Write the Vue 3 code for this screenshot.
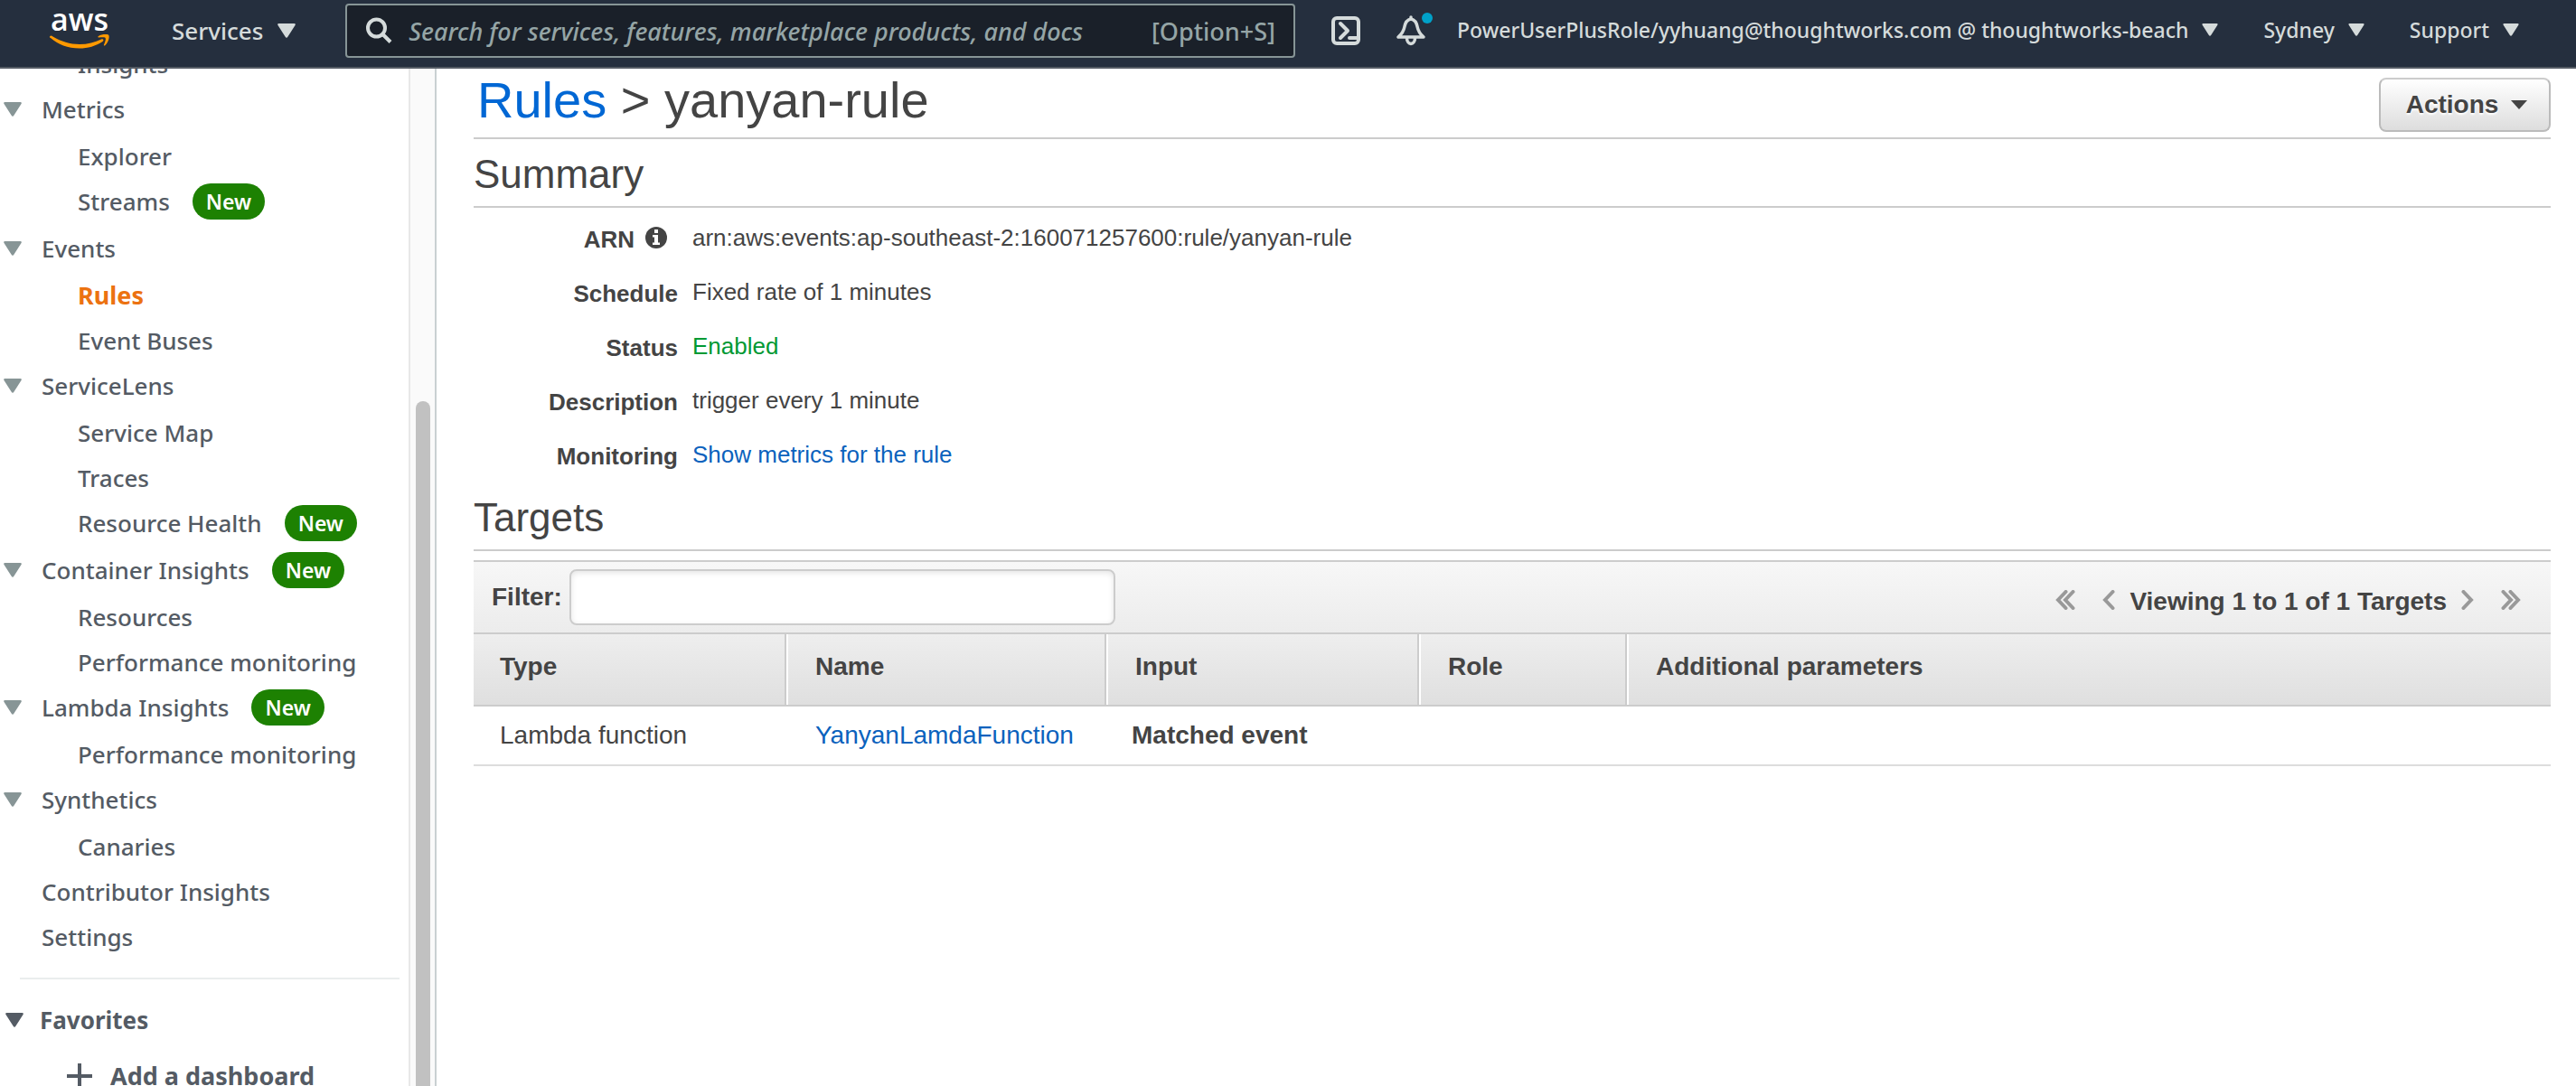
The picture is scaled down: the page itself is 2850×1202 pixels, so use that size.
<script setup>
import { ref } from 'vue'

const search = ref('')
const filter = ref('')

const groups = [
  { label: 'Insights', child: true },
  {
    label: 'Metrics',
    items: [{ label: 'Explorer' }, { label: 'Streams', isNew: true }],
  },
  {
    label: 'Events',
    items: [{ label: 'Rules', active: true }, { label: 'Event Buses' }],
  },
  {
    label: 'ServiceLens',
    items: [{ label: 'Service Map' }, { label: 'Traces' }, { label: 'Resource Health', isNew: true }],
  },
  {
    label: 'Container Insights',
    isNew: true,
    items: [{ label: 'Resources' }, { label: 'Performance monitoring' }],
  },
  { label: 'Lambda Insights', isNew: true, items: [{ label: 'Performance monitoring' }] },
  { label: 'Synthetics', items: [{ label: 'Canaries' }] },
  { label: 'Contributor Insights' },
  { label: 'Settings' },
]

const menus = ['PowerUserPlusRole/yyhuang@thoughtworks.com @ thoughtworks-beach', 'Sydney', 'Support']
const columns = ['Type', 'Name', 'Input', 'Role', 'Additional parameters']
</script>

<template>
  <div class="console">
    <header class="topbar">
      <a class="logo" href="#" aria-label="AWS home">
        <svg width="66" height="50" viewBox="0 -6 66 50">
          <text x="33" y="24" text-anchor="middle" class="logo-text">aws</text>
          <path fill="#ff9900" d="M0 30.500C1 29 2 29.500 3.500 30.500C13 36 22 39 33 39C42 39 50 37 57 33.500C59 32.500 60.500 34.500 58.500 36C51 41 42 43.500 33 43.500C20 43.500 9 39 1 32C0 31.500-.3 31 0 30.500Z" />
          <path fill="#ff9900" d="M54 30C57 28 62 27.500 65 28.500C66.500 29.500 65.500 36.500 61.500 40C60.500 41 59.500 40.500 60 39.500C61.500 36 62.500 33 61.500 31.800C60.500 31 57 31.200 54.500 31.400C53 31.500 53 30.700 54 30Z" />
        </svg>
      </a>
      <button class="menu services" type="button">
        Services
        <svg width="20" height="16" viewBox="0 0 20 16"><path class="tri" d="M1.500 0H18.500Q20.500 0 19.500 2L11.500 14.500Q10 17 8.500 14.500L.5 2Q-.5 0 1.500 0Z" /></svg>
      </button>
      <div class="search">
        <svg width="30" height="30" viewBox="0 0 30 30" fill="none" stroke="#d5dbdb" stroke-width="4">
          <circle cx="12.500" cy="12" r="9.500" />
          <path d="M19.500 19L28 27.500" />
        </svg>
        <input v-model="search" type="text" aria-label="Search" placeholder="Search for services, features, marketplace products, and docs" />
        <span class="hint">[Option+S]</span>
      </div>
      <button class="icon-button" type="button" aria-label="CloudShell">
        <svg width="32" height="32" viewBox="0 0 32 32" fill="none" stroke="#d5dbdb" stroke-width="4">
          <rect x="2" y="2" width="28" height="28" rx="4" />
          <path d="M10 8L18 16L10 24" stroke-linecap="round" stroke-linejoin="round" />
          <path d="M20 24H28" stroke-linecap="round" />
        </svg>
      </button>
      <button class="icon-button bell" type="button" aria-label="Notifications">
        <svg width="42" height="40" viewBox="0 0 42 40" fill="none" stroke="#d5dbdb" stroke-width="3.500" stroke-linejoin="round" stroke-linecap="round">
          <path d="M16 5V7M16 7C11 8 9.500 12 8.800 16C8 20.500 6 23.500 2 27H30C26 23.500 24 20.500 23.200 16C22.500 12 21 8 16 7Z" />
          <path d="M11.500 28C11.500 36.500 20.500 36.500 20.500 28" />
          <circle cx="34" cy="6" r="6" fill="#00a1c9" stroke="none" />
        </svg>
      </button>
      <button v-for="menu in menus" :key="menu" class="menu account" type="button">
        {{ menu }}
        <svg width="18" height="14" viewBox="0 0 20 16"><path class="tri" d="M1.500 0H18.500Q20.500 0 19.500 2L11.500 14.500Q10 17 8.500 14.500L.5 2Q-.5 0 1.500 0Z" /></svg>
      </button>
    </header>

    <div class="body">
      <aside class="sidebar">
        <nav class="nav" aria-label="CloudWatch">
          <ul>
            <li v-for="group in groups" :key="group.label">
              <div class="row" :class="{ child: group.child }">
                <svg v-if="group.items" class="marker" width="20" height="16" viewBox="0 0 20 16"><path d="M1.500 0H18.500Q20.500 0 19.500 2L11.500 14.500Q10 17 8.500 14.500L.5 2Q-.5 0 1.500 0Z" /></svg>
                <span v-else class="marker"></span>
                <a href="#">{{ group.label }}</a>
                <span v-if="group.isNew" class="badge">New</span>
              </div>
              <ul v-if="group.items" class="children">
                <li v-for="item in group.items" :key="item.label" class="row child" :class="{ tall: item.isNew }">
                  <span class="marker"></span>
                  <a href="#" :class="{ active: item.active }">{{ item.label }}</a>
                  <span v-if="item.isNew" class="badge">New</span>
                </li>
              </ul>
            </li>
          </ul>
          <hr />
          <div class="row favorites">
            <svg class="marker" width="20" height="16" viewBox="0 0 20 16"><path d="M1.500 0H18.500Q20.500 0 19.500 2L11.500 14.500Q10 17 8.500 14.500L.5 2Q-.5 0 1.500 0Z" /></svg>
            <a href="#">Favorites</a>
          </div>
          <div class="row add">
            <svg width="28" height="28" viewBox="0 0 28 28" stroke="#545b64" stroke-width="4"><path d="M0 14H28M14 0V28" /></svg>
            <a href="#">Add a dashboard</a>
          </div>
        </nav>
        <div class="track" aria-hidden="true"><div class="thumb"></div></div>
      </aside>

      <main class="main">
        <div class="title">
          <h1><a href="#">Rules</a> &gt; yanyan-rule</h1>
          <button class="actions" type="button">
            Actions
            <svg width="18" height="10" viewBox="0 0 18 10"><path fill="#444" d="M0 0H18L9 10Z" /></svg>
          </button>
        </div>

        <h2>Summary</h2>
        <dl class="summary">
          <dt>
            ARN
            <svg class="info" width="24" height="24" viewBox="0 0 24 24">
              <circle cx="12" cy="12" r="12" fill="#444" />
              <path fill="#fff" d="M10 3H14V7H10ZM8 9H14V17.500H16V20H8V17.500H10V11.500H8Z" />
            </svg>
          </dt>
          <dd>arn:aws:events:ap-southeast-2:160071257600:rule/yanyan-rule</dd>
          <dt>Schedule</dt>
          <dd>Fixed rate of 1 minutes</dd>
          <dt>Status</dt>
          <dd class="enabled">Enabled</dd>
          <dt>Description</dt>
          <dd>trigger every 1 minute</dd>
          <dt>Monitoring</dt>
          <dd><a href="#">Show metrics for the rule</a></dd>
        </dl>

        <h2>Targets</h2>
        <section class="targets">
          <div class="toolbar">
            <label for="filter">Filter:</label>
            <input id="filter" v-model="filter" type="text" />
            <div class="pager">
              <button type="button" aria-label="First page">
                <svg width="22" height="22" viewBox="0 0 22 22"><path d="M11.500 2L3 11L11.500 20M19.500 2L11 11L19.500 20" /></svg>
              </button>
              <button class="prev" type="button" aria-label="Previous page">
                <svg width="14" height="22" viewBox="0 0 14 22"><path d="M11.500 2L3 11L11.500 20" /></svg>
              </button>
              <span>Viewing 1 to 1 of 1 Targets</span>
              <button class="next" type="button" aria-label="Next page">
                <svg width="14" height="22" viewBox="0 0 14 22"><path d="M2.500 2L11 11L2.500 20" /></svg>
              </button>
              <button type="button" aria-label="Last page">
                <svg width="22" height="22" viewBox="0 0 22 22"><path d="M2.500 2L11 11L2.500 20M10.500 2L19 11L10.500 20" /></svg>
              </button>
            </div>
          </div>
          <table>
            <colgroup>
              <col class="c-type" /><col class="c-name" /><col class="c-input" /><col class="c-role" /><col />
            </colgroup>
            <thead>
              <tr>
                <th v-for="column in columns" :key="column" scope="col">{{ column }}</th>
              </tr>
            </thead>
            <tbody>
              <tr>
                <td>Lambda function</td>
                <td><a href="#">YanyanLamdaFunction</a></td>
                <td class="input">Matched event</td>
                <td></td>
                <td></td>
              </tr>
            </tbody>
          </table>
        </section>
      </main>
    </div>
  </div>
</template>

<style>
body {
  margin: 0;
  background: #fff;
}
</style>

<style scoped>
.console {
  display: flex;
  flex-direction: column;
  height: 100vh;
  overflow: hidden;
  color: #444;
  font-family: "Liberation Sans", Arial, sans-serif;
  font-size: 28px;
}
button {
  font: inherit;
  color: inherit;
  margin: 0;
  padding: 0;
  border: 0;
  background: none;
}
a {
  color: #0b62bd;
  text-decoration: none;
}
svg {
  flex: none;
}

/* top bar */
.topbar {
  display: flex;
  flex: none;
  box-sizing: border-box;
  height: 76px;
  padding: 4px 63px 0 55px;
  background: #252f3e;
  border-bottom: 2px solid #545b64;
  color: #d5dbdb;
  font-family: "Noto Sans", "Open Sans", sans-serif;
  font-weight: 500;
}
.topbar > * {
  flex: none;
  height: 60px;
}
.logo {
  display: flex;
}
.logo svg {
  overflow: visible;
}
.logo-text {
  font: 600 34px "Open Sans", "Noto Sans", sans-serif;
  fill: #fff;
}
.menu {
  display: flex;
  align-items: center;
  white-space: nowrap;
}
.tri {
  fill: #d5dbdb;
}
.services {
  gap: 16px;
  margin-left: 69px;
  font-size: 26px;
}
.account {
  gap: 15px;
  margin-left: 50px;
  padding-bottom: 2px;
  font-size: 23px;
}
.topbar > .search {
  flex: 1;
  display: flex;
  align-items: center;
  box-sizing: border-box;
  height: 60px;
  margin: 0 40px 0 55px;
  padding: 0 20px;
  border: 2px solid #879596;
  border-radius: 4px;
  background: #1a2029;
  color: #95a5a6;
  font-size: 27px;
}
.search input {
  flex: 1;
  min-width: 0;
  margin-left: 18px;
  padding: 0;
  border: 0;
  outline: 0;
  background: none;
  color: #d5dbdb;
  font: inherit;
}
.search input::placeholder {
  color: #95a5a6;
  font-style: italic;
  opacity: 1;
}
.icon-button {
  display: flex;
  align-items: center;
}
.bell {
  margin-left: 40px;
}
.bell + .account {
  margin-left: 25px;
}

/* sidebar */
.body {
  display: flex;
  flex: 1;
  min-height: 0;
}
.sidebar {
  display: flex;
  flex: none;
  font: 500 26px/50px "Noto Sans", "Open Sans", sans-serif;
}
.nav {
  width: 452px;
  overflow: hidden;
}
.nav ul {
  margin: 0;
  padding: 0;
  list-style: none;
}
.nav > ul {
  margin-top: -30px;
}
.nav a {
  color: #545b64;
}
.nav a.active {
  color: #ec7211;
  font-size: 27px;
  font-weight: 700;
}
.row {
  display: flex;
  align-items: center;
  height: 50px;
  padding-left: 4px;
}
.marker {
  width: 20px;
  margin-right: 22px;
  fill: #879596;
}
.row.child {
  padding-left: 44px;
}
.row.tall {
  padding-bottom: 2px;
}
.nav .children {
  margin-top: 2px;
}
.badge {
  margin-left: 25px;
  padding: 0 15px;
  border-radius: 20px;
  background: #1d8102;
  color: #fff;
  font-size: 23px;
  font-weight: 600;
  line-height: 40px;
}
.nav hr {
  height: 2px;
  margin: 20px 10px 20px 22px;
  border: 0;
  background: #eaeded;
}
.favorites {
  padding-left: 6px;
  font-weight: 700;
}
.favorites .marker {
  margin-right: 18px;
  fill: #545b64;
}
.row.add {
  gap: 20px;
  margin-top: 12px;
  padding-left: 74px;
  font-size: 27px;
  font-weight: 700;
}
.track {
  display: flex;
  flex-direction: column;
  width: 16px;
  padding: 368px 5px 0 6px;
  border-left: 2px solid #e8e8e8;
  border-right: 2px solid #c9d0d2;
  background: #fafafa;
}
.thumb {
  flex: 1;
  border-radius: 8px 8px 0 0;
  background: #c1c1c1;
}

/* content */
.main {
  flex: 1;
  min-width: 0;
  padding: 0 28px 0 41px;
}
.title {
  display: flex;
  justify-content: space-between;
  align-items: flex-start;
  height: 76px;
  border-bottom: 2px solid #ccc;
}
h1,
h2 {
  margin: 0;
  font-weight: 400;
  line-height: 70px;
}
h1 {
  padding-left: 4px;
  font-size: 56px;
}
h1 a {
  color: #0067d4;
}
h2 {
  padding-top: 4px;
  border-bottom: 2px solid #ccc;
  font-size: 44px;
}
.actions {
  display: flex;
  align-items: center;
  justify-content: center;
  gap: 14px;
  box-sizing: border-box;
  width: 190px;
  height: 60px;
  margin-top: 10px;
  padding-left: 4px;
  border: 2px solid #bbb;
  border-top-color: #ccc;
  border-radius: 8px;
  background: linear-gradient(#fff, #ddd);
  font-weight: 700;
  text-shadow: 0 2px 2px #fff;
}
.summary {
  display: grid;
  grid-template-columns: 226px 1fr;
  column-gap: 16px;
  grid-auto-rows: 60px;
  margin: 0;
  padding-top: 4px;
  font-size: 26px;
}
.summary dt {
  display: flex;
  justify-content: flex-end;
  align-items: center;
  height: 62px;
  font-weight: 700;
}
.summary dd {
  margin: 0;
  line-height: 58px;
}
.summary .enabled {
  color: #093;
}
.info {
  margin: 0 12px 4px;
}
.targets {
  margin-top: 10px;
  border-top: 2px solid #ccc;
}
.toolbar {
  display: flex;
  align-items: center;
  height: 78px;
  padding: 0 33px 0 20px;
  background: linear-gradient(#f7f7f7, #ececec);
  font-weight: 700;
}
.toolbar input {
  box-sizing: border-box;
  width: 604px;
  height: 62px;
  margin-left: 8px;
  padding: 0 12px;
  border: 2px solid #ccc;
  border-radius: 8px;
  outline: 0;
  background: #fff;
  box-shadow: inset 0 2px 6px #e4e4e4;
  color: inherit;
  font: inherit;
  font-weight: 400;
}
.pager {
  display: flex;
  align-items: center;
  margin-left: auto;
  padding-top: 10px;
}
.pager button {
  display: flex;
  padding-bottom: 4px;
}
.pager path {
  fill: none;
  stroke: #999;
  stroke-width: 4;
  stroke-linecap: round;
}
.pager .prev {
  margin: 0 16px 0 30px;
}
.pager .next {
  margin: 0 30px 0 16px;
}
table {
  width: 100%;
  border-collapse: separate;
  border-spacing: 0;
  table-layout: fixed;
}
.c-type {
  width: 346px;
}
.c-name {
  width: 354px;
}
.c-input {
  width: 346px;
}
.c-role {
  width: 230px;
}
th,
td {
  box-sizing: border-box;
  padding: 0 0 0 32px;
  text-align: left;
}
th {
  height: 82px;
  padding-bottom: 6px;
  border-top: 2px solid #ccc;
  border-right: 2px solid #ccc;
  border-bottom: 2px solid #ccc;
  background: linear-gradient(#eee, #dfdfdf);
}
th + th {
  box-shadow: inset 2px 0 #fff;
}
th:last-child {
  border-right: 0;
}
th:first-child,
td:first-child {
  padding-left: 29px;
}
td {
  height: 66px;
  border-bottom: 2px solid #ddd;
}
td.input {
  padding-left: 28px;
  font-weight: 700;
}
</style>
